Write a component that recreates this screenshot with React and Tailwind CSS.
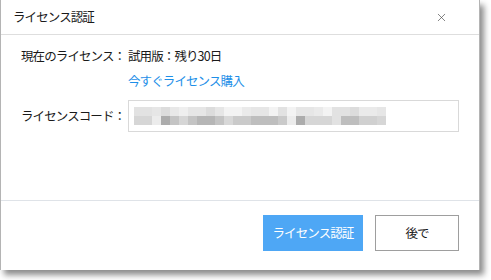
import { X } from 'lucide-react';

const topRow = ['#e2e2e2', '#e2e2e2', '#e6e6e6', '#dcdcdc', '#e8e8e8', '#efefef', '#e6e6e6', '#e6e6e6', '#dcdcdc', '#e6e6e6', '#f3f3f3', '#f3f3f3', '#eaeaea', '#e6e6e6', '#e6e6e6', '#f3f3f3', '#e2e2e2', '#f3f3f3', '#e6e6e6', '#e6e6e6', '#eaeaea', '#f3f3f3', '#e2e2e2', '#e2e2e2', '#dcdcdc', '#eaeaea', '#eaeaea', '#e6e6e6'];
const bottomRow = ['#d6d6d6', '#d6d6d6', '#ececec', '#acacac', '#c4c4c4', '#d6d6d6', '#c4c4c4', '#b6b6b6', '#b6b6b6', '#c4c4c4', '#d8d8d8', '#cacaca', '#cacaca', '#bebebe', '#bebebe', '#bebebe', '#cacaca', '#ececec', '#acacac', '#d6d6d6', '#d6d6d6', '#d6d6d6', '#e2e2e2', '#bebebe', '#bebebe', '#d0d0d0', '#d0d0d0', '#d6d6d6'];

const Mosaic = () => (
  <div className="flex flex-col">
    {[topRow, bottomRow].map((row, r) => (
      <div key={r} className="flex">
        {row.map((c, i) => (
          <div key={i} className="w-[9px] h-[9px]" style={{ backgroundColor: c }} />
        ))}
      </div>
    ))}
  </div>
);

export default function App() {
  return (
    <div
      className="w-[491px] h-[280px] bg-white text-[12.5px] tracking-[-0.9px] text-[#1a1a1a] whitespace-nowrap"
      style={{ fontFamily: '"Noto Sans CJK JP", "Noto Sans", sans-serif' }}
    >
      <div className="w-[480px] h-[270px] bg-white border-l border-r border-[#b4b4b4] shadow-[4px_5px_6px_rgba(0,0,0,0.45)] flex flex-col">
        {/* Title bar */}
        <div className="h-[35px] border-b border-[#dedede] flex items-center justify-between pl-[12px] pr-[31px]">
          <span className="leading-[20px]">ライセンス認証</span>
          <X className="w-[13px] h-[13px] text-[#444]" strokeWidth={1.2} />
        </div>

        {/* Body */}
        <div className="flex-1 pt-[11px] pl-[20px] pr-[20px]">
          <div className="flex items-center h-[20px]">
            <span className="w-[107px] shrink-0">現在のライセンス：</span>
            <span>試用版：残り30日</span>
          </div>
          <div className="flex h-[20px] mt-[5px] items-center">
            <span className="ml-[107px] text-[#1e8fe8]">今すぐライセンス購入</span>
          </div>
          <div className="flex items-center mt-[9px]">
            <span className="w-[107px] shrink-0">ライセンスコード：</span>
            <div className="w-[332px] h-[32px] border border-[#d9d9d9] flex items-center pl-[5px]">
              <Mosaic />
            </div>
          </div>
        </div>

        {/* Footer */}
        <div className="h-[70px] border-t border-[#dfe3e8] flex items-start justify-end gap-[12px] pt-[14px] pr-[20px]">
          <button className="w-[100px] h-[36px] bg-[#4ea7f5] text-white">
            ライセンス認証
          </button>
          <button className="w-[84px] h-[36px] border border-[#9e9e9e] bg-white text-[#1a1a1a]">
            後で
          </button>
        </div>
      </div>
    </div>
  );
}
